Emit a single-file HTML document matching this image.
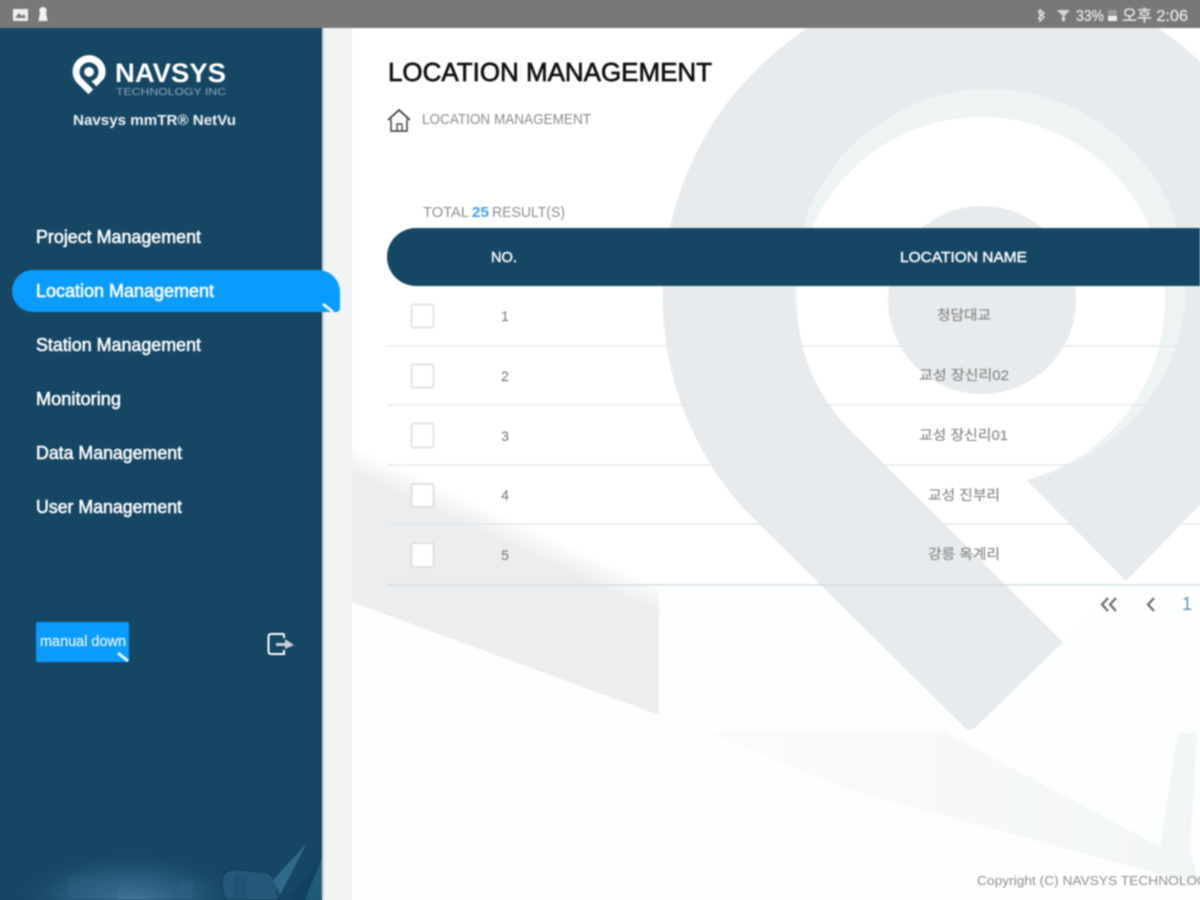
<!DOCTYPE html>
<html lang="en">
<head>
<meta charset="utf-8">
<title>Location Management</title>
<style>
html,body{margin:0;padding:0;width:1200px;height:900px;overflow:hidden;background:#fff}
svg{display:block;overflow:hidden}
.all{filter:blur(.7px)}
text{font-family:"Liberation Sans","Noto Sans CJK KR",sans-serif}
.menu{font-size:18px;fill:#fff;stroke:#fff;stroke-width:.55px}
.num{font-size:14px;fill:#808080;text-anchor:middle;stroke:#808080;stroke-width:.15px}
.loc{font-size:14px;fill:#858585;stroke:#858585;stroke-width:.15px}
.cb{fill:#fff;stroke:#dadada;stroke-width:1.5}
.sep{stroke:#e3e8ea;stroke-width:1.5}
</style>
</head>
<body>
<svg width="1200" height="900" viewBox="0 0 1200 900" xmlns="http://www.w3.org/2000/svg">
<defs>
<linearGradient id="fadeA" x1="432" y1="481" x2="421" y2="505" gradientUnits="userSpaceOnUse">
<stop offset="0" stop-color="#ebedef" stop-opacity="0"/>
<stop offset="1" stop-color="#ebedef"/>
</linearGradient>
<linearGradient id="fadeB" x1="700" y1="0" x2="1200" y2="0" gradientUnits="userSpaceOnUse">
<stop offset="0" stop-color="#f3f5f6" stop-opacity=".25"/>
<stop offset="1" stop-color="#f2f5f6"/>
</linearGradient>
<radialGradient id="glow" gradientUnits="userSpaceOnUse" cx="130" cy="905" r="125" gradientTransform="translate(0 905) scale(1 .46) translate(0 -905)">
<stop offset="0" stop-color="#477b9b"/>
<stop offset=".55" stop-color="#33668a" stop-opacity=".55"/>
<stop offset="1" stop-color="#154664" stop-opacity="0"/>
</radialGradient>
<path id="pin" fill-rule="evenodd" d="M1126,581 L1273,430 A320,320 0 1 0 742,507 L964,727 Q970,733 976,727 L1063,642 L851,431 A184,184 0 1 1 1026,480 Z"/>
</defs>

<!-- unblurred base so the blur does not fade at the frame edges -->
<rect width="1200" height="900" fill="#fff"/>
<rect x="352" y="590" width="848" height="310" fill="#fdfefe"/>
<rect x="322" y="28" width="30" height="872" fill="#f2f3f3"/>
<rect width="1200" height="28" fill="#787878"/>
<rect y="28" width="322" height="872" fill="#154664"/>
<rect x="1190" y="228" width="10" height="58" fill="#154664"/>

<g class="all">
<!-- page background -->
<rect width="1200" height="900" fill="#fff"/>
<rect x="352" y="590" width="848" height="310" fill="#fdfefe"/>
<rect x="322" y="28" width="30" height="872" fill="#f2f3f3"/>

<!-- watermark -->
<polygon points="352,443 641,580 659,590 659,715 352,602" fill="url(#fadeA)"/>
<polygon points="706,732 945,732 1160,847 1178,733 1197,733 1190,850 1200,885 850,790" fill="url(#fadeB)"/>
<use href="#pin" fill="#e8ebed"/>
<circle cx="990" cy="285" r="196" fill="#eef3f4"/>
<circle cx="981" cy="301" r="184" fill="#fff"/>
<polygon points="1063,642 1126,581 1026,480 960,400 851,431" fill="#fff"/>
<circle cx="982" cy="300" r="94" fill="#e8ebed"/>

<!-- status bar -->
<rect x="0" y="-30" width="1200" height="58" fill="#787878"/>
<rect x="13" y="9" width="15" height="12" rx="1" fill="#f0f0f0"/>
<path d="M15 18 L19 13 L22 16 L24 14 L26 18Z" fill="#787878"/>
<path d="M43 7a3.5 3.5 0 0 1 3 5.5 L47.500 21 H38.500 L40 12.500 A3.500 3.500 0 0 1 43 7Z" fill="#f2f2f2"/>
<path d="M1040 10 L1044 13 L1038 19 M1038 11 L1044 17 L1040 21 V9" fill="none" stroke="#e6e6e6" stroke-width="1.3"/>
<path d="M1057 10 H1070 L1063.500 17Z" fill="#d8d8d8"/>
<rect x="1062" y="17" width="3" height="4" fill="#e0e0e0"/>
<text x="1076" y="21" font-size="16" fill="#e8e8e8" stroke="#e8e8e8" stroke-width=".25" textLength="28" lengthAdjust="spacingAndGlyphs">33%</text>
<rect x="1108" y="10" width="9" height="11" fill="#9a9a9a"/>
<rect x="1108" y="16" width="9" height="5" fill="#f0f0f0"/>
<text x="1122" y="21" font-size="16" fill="#e8e8e8" stroke="#e8e8e8" stroke-width=".25" textLength="66" lengthAdjust="spacingAndGlyphs">오후 2:06</text>

<!-- sidebar -->
<rect y="28" width="322" height="872" fill="#154664"/>
<rect x="322" y="28" width="2" height="872" fill="#cfd6da"/>
<rect x="5" y="846" width="250" height="54" fill="url(#glow)"/>
<g opacity=".5">
<rect x="68" y="877" width="29" height="23" fill="#2c5f80"/>
<rect x="97" y="884" width="20" height="16" fill="#2f6384"/>
<rect x="180" y="880" width="13" height="20" fill="#2c5f80"/>
</g>
<path d="M222 882 Q222 868 240 870 L268 873 Q275 878 277 890 L279 900 H226 Q222 892 222 882Z" fill="#24597a" stroke="#123c58" stroke-width="1"/>
<path d="M234 875 H247 V900 H234Z" fill="#1d5070" opacity=".7"/>
<path d="M307 843 L273 880 L280 895 Z" fill="#2f6a8b"/>
<path d="M288 900 L320 858 V900Z" fill="#124060"/>
<path d="M322 858 L305 900 H322Z" fill="#2a6f8c" opacity=".6"/>

<!-- logo -->
<g transform="translate(89 72) scale(.0516) translate(-981 -303)">
<use href="#pin" fill="#fff"/>
<circle cx="982" cy="300" r="94" fill="#fff"/>
</g>
<text x="115" y="82" font-size="27" font-weight="700" fill="#fff" textLength="111" lengthAdjust="spacingAndGlyphs">NAVSYS</text>
<text x="116" y="95" font-size="10.500" fill="#8fa8b9" textLength="110" lengthAdjust="spacingAndGlyphs">TECHNOLOGY INC</text>
<text x="73" y="125" font-size="14.500" font-weight="700" fill="#eef2f5" textLength="163" lengthAdjust="spacingAndGlyphs">Navsys mmTR® NetVu</text>

<!-- menu -->
<text class="menu" x="36" y="243" textLength="165" lengthAdjust="spacingAndGlyphs">Project Management</text>
<path d="M33 270 H318 A22 22 0 0 1 340 292 V308 A4 4 0 0 1 336 312 H33 A21 21 0 0 1 33 270Z" fill="#0a9bff"/>
<path d="M323 304 L333 312" stroke="#e9f5fd" stroke-width="3"/>
<text class="menu" x="36" y="297" textLength="178" lengthAdjust="spacingAndGlyphs">Location Management</text>
<text class="menu" x="36" y="351" textLength="165" lengthAdjust="spacingAndGlyphs">Station Management</text>
<text class="menu" x="36" y="405" textLength="85" lengthAdjust="spacingAndGlyphs">Monitoring</text>
<text class="menu" x="36" y="459" textLength="146" lengthAdjust="spacingAndGlyphs">Data Management</text>
<text class="menu" x="36" y="513" textLength="146" lengthAdjust="spacingAndGlyphs">User Management</text>

<!-- manual button -->
<rect x="36" y="622" width="93" height="40" rx="2" fill="#0a9bff"/>
<text x="40" y="646" font-size="15" fill="#eaf6ff" stroke="#eaf6ff" stroke-width=".2" textLength="86" lengthAdjust="spacingAndGlyphs">manual down</text>
<path d="M118 653 L128 661" stroke="#e9f5fd" stroke-width="3"/>

<!-- logout -->
<path d="M284 634 H271 Q268.500 634 268.500 637 V651 Q268.500 654 271 654 H284 V650" fill="none" stroke="#fff" stroke-width="2"/>
<path d="M284 634 V638" stroke="#fff" stroke-width="2"/>
<path d="M276 643 H285 V639 L294 645 L285 649 V646 H276Z" fill="#c9d0d6"/>

<!-- heading -->
<text x="388" y="81" font-size="26" fill="#111" stroke="#111" stroke-width=".7" textLength="324" lengthAdjust="spacingAndGlyphs">LOCATION MANAGEMENT</text>

<!-- home icon -->
<path d="M388 120 L399 110 L410 120" fill="none" stroke="#333" stroke-width="1.600"/>
<path d="M391 119 V131 H407 V119" fill="none" stroke="#333" stroke-width="1.400"/>
<path d="M397 131 V124 H402 V131" fill="none" stroke="#333" stroke-width="1.200"/>
<text x="422" y="124" font-size="14.500" fill="#8a8a8a" textLength="169" lengthAdjust="spacingAndGlyphs">LOCATION MANAGEMENT</text>

<!-- total -->
<text x="423" y="217" font-size="14.500" fill="#8c8c8c" textLength="46" lengthAdjust="spacingAndGlyphs">TOTAL</text>
<text x="472" y="217" font-size="14.500" font-weight="700" fill="#3f9ff0" textLength="17" lengthAdjust="spacingAndGlyphs">25</text>
<text x="492" y="217" font-size="14.500" fill="#8c8c8c" textLength="73" lengthAdjust="spacingAndGlyphs">RESULT(S)</text>

<!-- table header -->
<path d="M416 228 H1200 V286 H416 A29 29 0 0 1 416 228Z" fill="#154664"/>
<text x="491" y="262" font-size="14.500" fill="#fff" stroke="#fff" stroke-width=".4" textLength="26" lengthAdjust="spacingAndGlyphs">NO.</text>
<text x="900" y="262" font-size="14.500" fill="#fff" stroke="#fff" stroke-width=".4" textLength="127" lengthAdjust="spacingAndGlyphs">LOCATION NAME</text>

<!-- rows -->
<line class="sep" x1="387" y1="346" x2="1200" y2="346"/>
<line class="sep" x1="387" y1="405" x2="1200" y2="405"/>
<line class="sep" x1="387" y1="465" x2="1200" y2="465"/>
<line class="sep" x1="387" y1="524" x2="1200" y2="524"/>
<line x1="387" y1="585" x2="1200" y2="585" stroke="#cfdbe0" stroke-width="1.500"/>

<rect class="cb" x="411.500" y="304.500" width="22" height="23" rx="2"/>
<rect class="cb" x="411.500" y="364.500" width="22" height="23" rx="1"/>
<rect class="cb" x="411.500" y="423.500" width="22" height="24" rx="2"/>
<rect class="cb" x="411.500" y="484" width="22" height="23" rx="1"/>
<rect class="cb" x="411.500" y="543" width="22" height="24" rx="2"/>

<text class="num" x="505" y="321">1</text>
<text class="num" x="505" y="381">2</text>
<text class="num" x="505" y="441">3</text>
<text class="num" x="505" y="500">4</text>
<text class="num" x="505" y="560">5</text>

<text class="loc" x="937" y="320" textLength="54" lengthAdjust="spacingAndGlyphs">청담대교</text>
<text class="loc" x="919" y="380" textLength="90" lengthAdjust="spacingAndGlyphs">교성 장신리02</text>
<text class="loc" x="919" y="440" textLength="89" lengthAdjust="spacingAndGlyphs">교성 장신리01</text>
<text class="loc" x="928" y="500" textLength="72" lengthAdjust="spacingAndGlyphs">교성 진부리</text>
<text class="loc" x="928" y="559" textLength="72" lengthAdjust="spacingAndGlyphs">강릉 옥계리</text>

<!-- pagination -->
<path d="M1108 598 L1102 604.500 L1108 611 M1116 598 L1110 604.500 L1116 611" fill="none" stroke="#6b6b6b" stroke-width="2.200"/>
<path d="M1154 598 L1148 604.500 L1154 611" fill="none" stroke="#6b6b6b" stroke-width="2.200"/>
<text x="1187" y="610" font-size="18" fill="#5c93c4" text-anchor="middle">1</text>

<!-- footer -->
<text x="977" y="885" font-size="12.500" fill="#8d8d8d" textLength="240" lengthAdjust="spacingAndGlyphs">Copyright (C) NAVSYS TECHNOLOGY</text>
</g>
</svg>
</body>
</html>
